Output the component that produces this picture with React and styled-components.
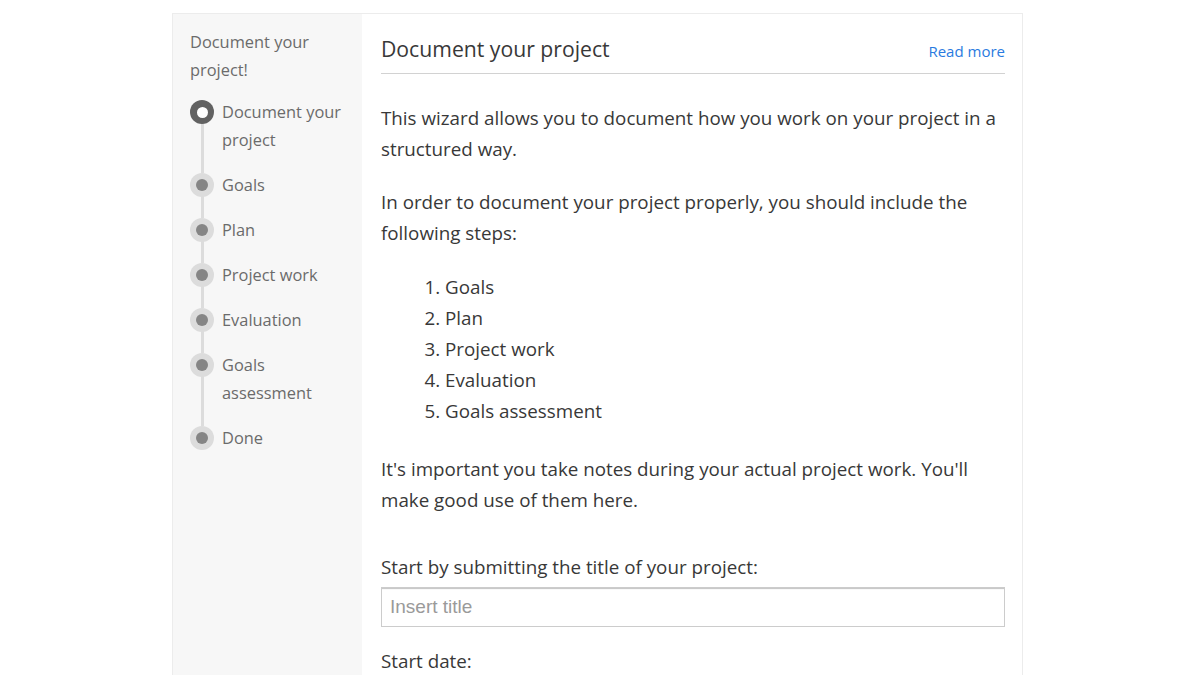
import styled, { createGlobalStyle } from 'styled-components';

const GlobalStyle = createGlobalStyle`
    html, body {
        margin: 0;
        padding: 0;
        background: #ffffff;
        font-family: "Open Sans", "Noto Sans", sans-serif;
        overflow: hidden;
    }
`;

const Page = styled.div`
    padding: 13px 0 0 172px;
    height: 675px;
    box-sizing: border-box;
`;

const Card = styled.div`
    width: 849px;
    display: flex;
    border: 1px solid #ececec;
    border-bottom: none;
    min-height: 700px;
`;

const Sidebar = styled.div`
    width: 189px;
    flex-shrink: 0;
    background-color: #f7f7f7;
    padding: 14px 8px 0 17px;
    box-sizing: border-box;
`;

const SideTitle = styled.div`
    font-size: 16.4px;
    line-height: 28px;
    color: #6b6b6b;
    margin-bottom: 14px;
`;

const Steps = styled.ul`
    list-style: none;
    margin: 0;
    padding: 0;
`;

const Step = styled.li`
    position: relative;
    display: flex;
    align-items: flex-start;
    gap: 8px;
    margin-bottom: 17px;
    font-size: 16.4px;
    line-height: 28px;
    color: #6b6b6b;

    &:not(:last-child)::before {
        content: '';
        position: absolute;
        left: 11px;
        top: 24px;
        bottom: -19px;
        width: 3px;
        background: #dcdcdc;
    }
`;

const Dot = styled.span`
    position: relative;
    flex-shrink: 0;
    width: 24px;
    height: 24px;
    margin-top: 2px;
    border-radius: 50%;
    background: ${p => (p.$active ? '#626262' : '#dcdcdc')};
    display: flex;
    align-items: center;
    justify-content: center;

    &::after {
        content: '';
        width: ${p => (p.$active ? '11px' : '12px')};
        height: ${p => (p.$active ? '11px' : '12px')};
        border-radius: 50%;
        background: ${p => (p.$active ? '#ffffff' : '#858585')};
    }
`;

const Main = styled.div`
    flex: 1;
    padding: 20px 17px 0 19px;
    color: #383838;
`;

const Header = styled.div`
    display: flex;
    justify-content: space-between;
    align-items: baseline;
    padding-bottom: 9px;
    border-bottom: 1px solid #d2d2d2;
`;

const Title = styled.h2`
    margin: 0;
    font-size: 21.2px;
    font-weight: 400;
    line-height: 30px;
    color: #383838;
`;

const ReadMore = styled.a`
    font-size: 15px;
    color: #2a7be0;
    text-decoration: none;
    cursor: pointer;
`;

const Text = styled.p`
    margin: ${p => p.$top || '22px'} 0 0 0;
    font-size: 18.8px;
    line-height: 31px;
`;

const StepList = styled.ol`
    margin: 23px 0 0 0;
    padding-left: 64px;
    font-size: 18.8px;
    line-height: 31px;
`;

const Label = styled.label`
    display: block;
    margin-top: ${p => p.$top || '36px'};
    font-size: 18.8px;
    line-height: 31px;
`;

const Input = styled.input`
    display: block;
    width: 100%;
    height: 40px;
    box-sizing: border-box;
    margin-top: 4px;
    padding: 0 8px;
    border: 1px solid #cccccc;
    box-shadow: inset 0 2px 1px -1px #c4c4c4;
    font-family: "Liberation Sans", Arial, sans-serif;
    font-size: 19px;
    color: #333;
    outline: none;

    &::placeholder {
        color: #9a9a9a;
    }
`;

const steps = [
  'Document your project',
  'Goals',
  'Plan',
  'Project work',
  'Evaluation',
  'Goals assessment',
  'Done',
];

const App = () => {
  return (
    <>
      <GlobalStyle />
      <Page>
        <Card>
          <Sidebar>
            <SideTitle>Document your project!</SideTitle>
            <Steps>
              {steps.map((s, i) => (
                <Step key={s}>
                  <Dot $active={i === 0} />
                  <span>{s}</span>
                </Step>
              ))}
            </Steps>
          </Sidebar>

          <Main>
            <Header>
              <Title>Document your project</Title>
              <ReadMore>Read more</ReadMore>
            </Header>
            <Text $top="29px">
              This wizard allows you to document how you work on your project in a structured way.
            </Text>
            <Text>
              In order to document your project properly, you should include the following steps:
            </Text>
            <StepList>
              <li>Goals</li>
              <li>Plan</li>
              <li>Project work</li>
              <li>Evaluation</li>
              <li>Goals assessment</li>
            </StepList>
            <Text $top="27px">
              It's important you take notes during your actual project work. You'll make good use of them here.
            </Text>
            <Label>Start by submitting the title of your project:</Label>
            <Input placeholder="Insert title" />
            <Label $top="19px">Start date:</Label>
          </Main>
        </Card>
      </Page>
    </>
  );
};

export default App;
